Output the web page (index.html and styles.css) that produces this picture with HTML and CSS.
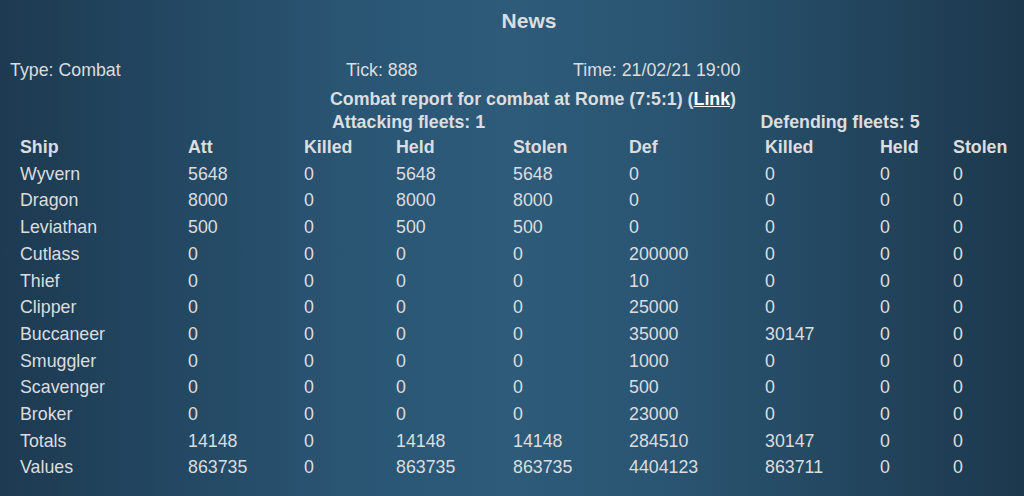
FILE: index.html
```html
<!DOCTYPE html>
<html>

<head>
    <meta charset="UTF-8">
    <title>News</title>
    <link rel="stylesheet" href="styles.css">
</head>

<body>
    <div class="news">
        <h1 class="title">News</h1>
        <div class="info">
            <div>Type: Combat</div>
            <div>Tick: 888</div>
            <div>Time: 21/02/21 19:00</div>
        </div>
        <div class="report">Combat report for combat at Rome (7:5:1) (<a href="#">Link</a>)</div>
        <table class="ships">
            <colgroup>
                <col class="c-ship">
                <col class="c-att">
                <col class="c-killed">
                <col class="c-held">
                <col class="c-stolen">
                <col class="c-def">
                <col class="c-dkilled">
                <col class="c-dheld">
                <col class="c-dstolen">
            </colgroup>
            <tr class="fleets">
                <th></th>
                <th colspan="4">Attacking fleets: 1</th>
                <th colspan="4">Defending fleets: 5</th>
            </tr>
            <tr class="head">
                <th>Ship</th>
                <th>Att</th>
                <th>Killed</th>
                <th>Held</th>
                <th>Stolen</th>
                <th>Def</th>
                <th>Killed</th>
                <th>Held</th>
                <th>Stolen</th>
            </tr>
            <tr><td>Wyvern</td><td>5648</td><td>0</td><td>5648</td><td>5648</td><td>0</td><td>0</td><td>0</td><td>0</td></tr>
            <tr><td>Dragon</td><td>8000</td><td>0</td><td>8000</td><td>8000</td><td>0</td><td>0</td><td>0</td><td>0</td></tr>
            <tr><td>Leviathan</td><td>500</td><td>0</td><td>500</td><td>500</td><td>0</td><td>0</td><td>0</td><td>0</td></tr>
            <tr><td>Cutlass</td><td>0</td><td>0</td><td>0</td><td>0</td><td>200000</td><td>0</td><td>0</td><td>0</td></tr>
            <tr><td>Thief</td><td>0</td><td>0</td><td>0</td><td>0</td><td>10</td><td>0</td><td>0</td><td>0</td></tr>
            <tr><td>Clipper</td><td>0</td><td>0</td><td>0</td><td>0</td><td>25000</td><td>0</td><td>0</td><td>0</td></tr>
            <tr><td>Buccaneer</td><td>0</td><td>0</td><td>0</td><td>0</td><td>35000</td><td>30147</td><td>0</td><td>0</td></tr>
            <tr><td>Smuggler</td><td>0</td><td>0</td><td>0</td><td>0</td><td>1000</td><td>0</td><td>0</td><td>0</td></tr>
            <tr><td>Scavenger</td><td>0</td><td>0</td><td>0</td><td>0</td><td>500</td><td>0</td><td>0</td><td>0</td></tr>
            <tr><td>Broker</td><td>0</td><td>0</td><td>0</td><td>0</td><td>23000</td><td>0</td><td>0</td><td>0</td></tr>
            <tr><td>Totals</td><td>14148</td><td>0</td><td>14148</td><td>14148</td><td>284510</td><td>30147</td><td>0</td><td>0</td></tr>
            <tr><td>Values</td><td>863735</td><td>0</td><td>863735</td><td>863735</td><td>4404123</td><td>863711</td><td>0</td><td>0</td></tr>
        </table>
    </div>
</body>

</html>
```

FILE: styles.css
```css
body {
    margin: 0;
    padding: 0;
    height: 496px;
    overflow: hidden;
    font-family: "Liberation Sans", Arial, sans-serif;
    font-size: 17.8px;
    color: #dcdddf;
    background: linear-gradient(90deg, #1d3a51 0%, #2a5674 35%, #2d5b79 50%, #2a5572 65%, #1c384d 100%);
}

.news {
    width: 1066px;
}

.title {
    margin: 0;
    padding-right: 8px;
    font-size: 21px;
    line-height: 41px;
    text-align: center;
    font-weight: bold;
}

.info {
    display: grid;
    grid-template-columns: 336px 227px 1fr;
    padding-left: 10px;
    margin-top: 17px;
    line-height: 24px;
}

.report {
    margin-top: 6px;
    line-height: 23px;
    text-align: center;
    font-weight: bold;
}

.report a {
    color: #ffffff;
}

.ships {
    margin-left: 20px;
    border-collapse: collapse;
    table-layout: fixed;
    width: 1031px;
}

.c-ship { width: 168px; }
.c-att { width: 116px; }
.c-killed { width: 92px; }
.c-held { width: 117px; }
.c-stolen { width: 116px; }
.c-def { width: 136px; }
.c-dkilled { width: 115px; }
.c-dheld { width: 73px; }
.c-dstolen { width: 98px; }

.ships th,
.ships td {
    padding: 0;
    text-align: left;
    white-space: nowrap;
    height: 26.7px;
    line-height: 26.7px;
}

.ships .fleets th {
    text-align: center;
    height: 23px;
    line-height: 23px;
}
```
